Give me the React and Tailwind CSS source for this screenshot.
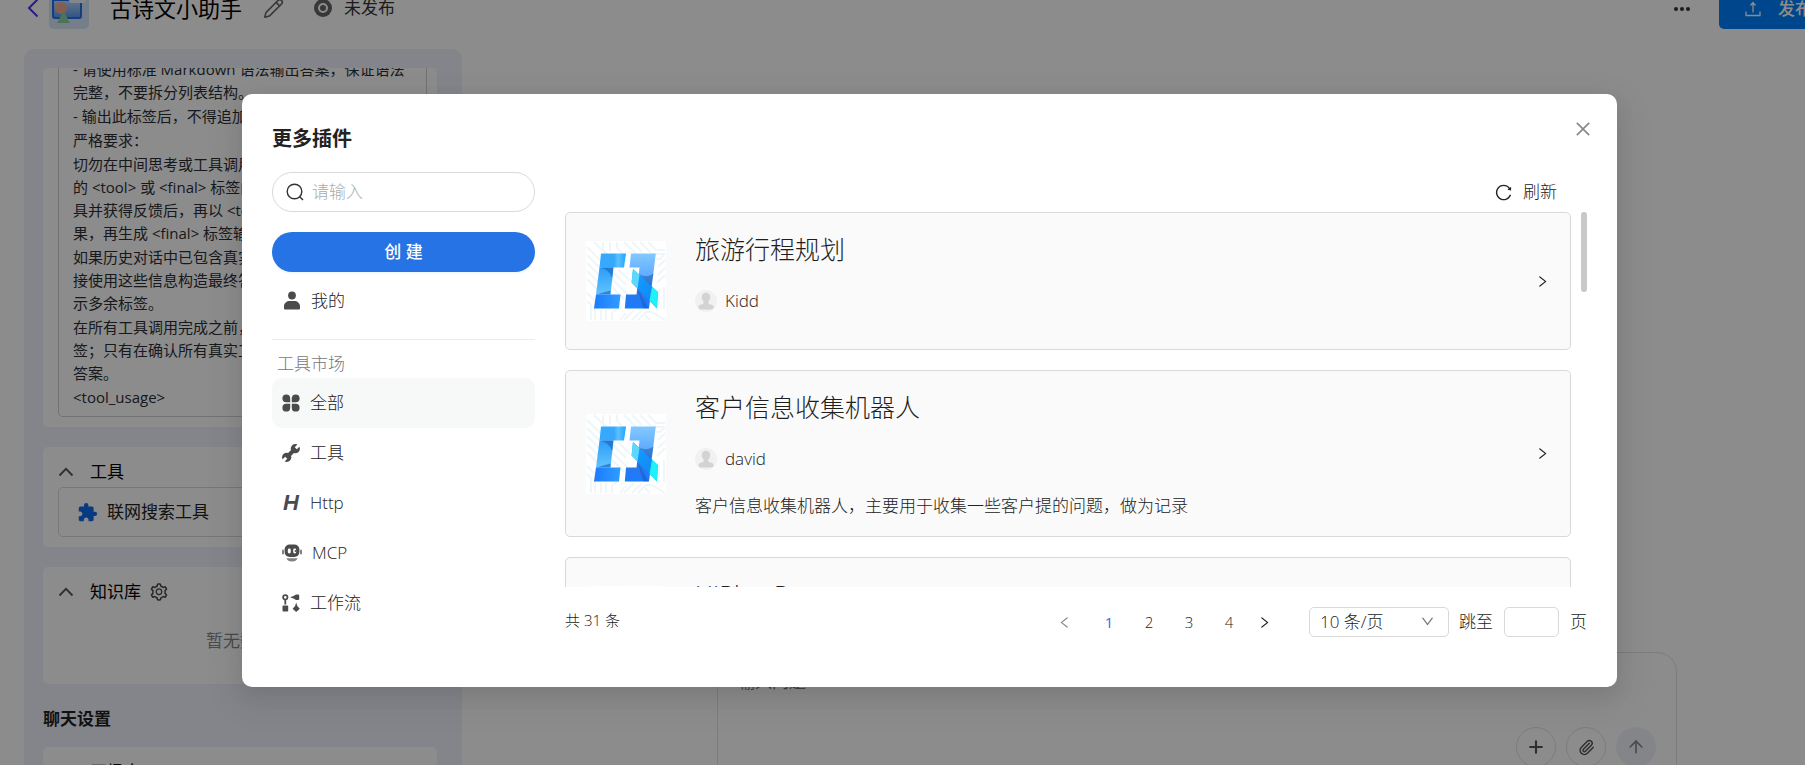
import React, { useState } from "react";
import {
  AiOutlineClose,
  AiOutlineDown,
  AiOutlineLeft,
  AiOutlineReload,
  AiOutlineRight,
  AiOutlineSetting,
} from "react-icons/ai";
import { MdExtension } from "react-icons/md";
import { ArrowUp, Paperclip, Pencil, Plus } from "lucide-react";

const PROMPT = [
  "- 请使用标准 Markdown 语法输出答案，保证语法\n完整，不要拆分列表结构。",
  "- 输出此标签后，不得追加",
  "严格要求：",
  "切勿在中间思考或工具调用\n的 <tool> 或 <final> 标签内\n具并获得反馈后，再以 <tool>\n果，再生成 <final> 标签输出",
  "如果历史对话中已包含真实\n接使用这些信息构造最终答\n示多余标签。",
  "在所有工具调用完成之前，\n签；只有在确认所有真实工\n答案。",
  "<tool_usage>",
];

const PLUGINS = [
  { id: 1, name: "旅游行程规划", author: "Kidd", desc: "" },
  {
    id: 2,
    name: "客户信息收集机器人",
    author: "david",
    desc: "客户信息收集机器人，主要用于收集一些客户提的问题，做为记录",
  },
  { id: 3, name: "HIPlus-P", author: "david", desc: "" },
];

const SearchIcon = () => (
  <svg width="18" height="18" viewBox="0 0 18 18" fill="none" stroke="#333" strokeWidth="1.400">
    <circle cx="8.500" cy="8.500" r="7.300" />
    <path d="M13.500 13.500 17 17" />
  </svg>
);

const UserIcon = () => (
  <svg width="18" height="20" viewBox="0 0 18 20" fill="#4b4b4b">
    <circle cx="9" cy="4.500" r="3.900" />
    <path d="M1 18.500v-3.200C1 12 4 10 6.500 10h5c2.500 0 5.500 2 5.500 5.300v2.200a1 1 0 0 1-1 1H2a1 1 0 0 1-1-1z" />
  </svg>
);

const AllIcon = () => (
  <svg width="18" height="18" viewBox="0 0 18 18" fill="#4b4b4b">
    <path d="M8.200 8.200H4.300A3.900 3.900 0 1 1 8.200 4.300z" />
    <path d="M9.800 8.200V4.300a3.900 3.900 0 1 1 3.900 3.900z" />
    <path d="M8.200 9.800v3.900a3.900 3.900 0 1 1-3.900-3.900z" />
    <path d="M9.800 9.800h3.900a3.900 3.900 0 1 1-3.900 3.900z" />
  </svg>
);

const WrenchIcon = () => (
  <svg width="18" height="18" viewBox="0 0 18 18">
    <mask id="jaws">
      <rect width="18" height="18" fill="#fff" />
      <path d="M13.800 4.200 18 0M4.200 13.800 0 18" stroke="#000" strokeWidth="3" />
    </mask>
    <g mask="url(#jaws)" fill="#4b4b4b">
      <circle cx="13.300" cy="4.700" r="4.600" />
      <circle cx="4.700" cy="13.300" r="4.600" />
      <path d="M5 13 13 5" stroke="#4b4b4b" strokeWidth="4" />
    </g>
  </svg>
);

const HttpIcon = () => (
  <span className="flex w-[18px] justify-center font-['Liberation_Sans',sans-serif] text-[22px] leading-5 font-bold italic text-[#4b4b4b]">
    H
  </span>
);

const RobotIcon = () => (
  <svg width="20" height="18" viewBox="0 0 20 18" fill="#4b4b4b">
    <rect x="0" y="5.500" width="2" height="5" rx="1" opacity="0.700" />
    <rect x="18" y="5.500" width="2" height="5" rx="1" opacity="0.700" />
    <rect x="2.600" y="0.500" width="14.800" height="12.500" rx="5" />
    <rect x="5.800" y="4.500" width="3" height="5" rx="1.400" fill="#fff" />
    <rect x="11.200" y="4.500" width="3" height="5" rx="1.400" fill="#fff" />
    <circle cx="13.600" cy="7" r="1" />
    <path d="M4.500 14.200h11c-.8 2.400-2.500 3.300-5.500 3.300s-4.700-.9-5.500-3.300z" opacity="0.700" />
  </svg>
);

const FlowIcon = () => (
  <svg width="18" height="18" viewBox="0 0 18 18" fill="#4b4b4b">
    <circle cx="3.300" cy="3.300" r="2.200" fill="none" stroke="#4b4b4b" strokeWidth="1.700" />
    <path d="M2.400 6h1.800v4.500H2.400z" />
    <rect x="0.500" y="11.500" width="5.700" height="6" rx="1" />
    <path d="M8 3.300 11.500 2l2.500-1.500h2.200a1 1 0 0 1 1 1v3.600a1 1 0 0 1-1 1H14L11.500 4.600z" />
    <path d="M14.200 8.500l1.100 3.500 2.500 2.700-3.600 3.300-3.600-3.300 2.500-2.700z" />
  </svg>
);

const MARKET = [
  { key: "all", label: "全部", icon: <AllIcon /> },
  { key: "tool", label: "工具", icon: <WrenchIcon /> },
  { key: "http", label: "Http", icon: <HttpIcon /> },
  { key: "mcp", label: "MCP", icon: <RobotIcon /> },
  { key: "flow", label: "工作流", icon: <FlowIcon /> },
];

const PluginLogo = ({ id }) => (
  <svg width="80" height="80" viewBox="0 0 80 80" className="shrink-0">
    <defs>
      <linearGradient id={`top${id}`} x1="0" x2="1">
        <stop offset="0.550" stopColor="#36a9ff" />
        <stop offset="0.700" stopColor="#5cc0ff" />
        <stop offset="1" stopColor="#1ea6ff" />
      </linearGradient>
      <linearGradient id={`left${id}`} x1="0" x2="0" y1="0" y2="1">
        <stop offset="0" stopColor="#2b9cf8" />
        <stop offset="1" stopColor="#62c4ff" />
      </linearGradient>
      <linearGradient id={`base${id}`} x1="0" x2="1">
        <stop offset="0" stopColor="#1b7bff" />
        <stop offset="1" stopColor="#2f9dff" />
      </linearGradient>
      <linearGradient id={`right${id}`} x1="0" x2="0" y1="0" y2="1">
        <stop offset="0" stopColor="#84c8ff" />
        <stop offset="0.450" stopColor="#5aa9ff" />
        <stop offset="0.700" stopColor="#2a78e8" />
        <stop offset="1" stopColor="#1b7bff" />
      </linearGradient>
      <linearGradient id={`band${id}`} x1="0" x2="1" y1="0" y2="1">
        <stop offset="0" stopColor="#18a0ff" />
        <stop offset="1" stopColor="#0b84f5" />
      </linearGradient>
    </defs>
    <rect width="80" height="80" rx="2" fill="#fff" />
    <g fill="none" stroke="#eef6fa" strokeWidth="1.800">
      <path d="M1 6l20 20M1 14l16 16M1 22l14 14M1 30l12 12M8 1l16 16M1 38l10 10M1 52l8 8v19M1 60l4 4v15M15 79V69M20 79V69M26 79V72l6-5" />
      <path d="M17 1v8l4 4M24 1v10M31 1v6l8 8M38 1l14 14M46 1l10 10M54 1l12 12h13M62 1l8 8h9M70 18h4l5-5M72 26l7-7M72 34l7-7M71 42l8-8M73 48v16M78 46v22" />
      <path d="M26 30l14 14M32 28l12 12M26 38l16 16M26 46l12 12M38 79l10-10M46 79l9-9M52 79l8-8h6l13 8M34 79l6-7M64 79l-5-5" />
    </g>
    <path d="M15 12.500H40L38 26.500H13.500z" fill={`url(#top${id})`} />
    <path d="M13.500 26.500H27.500L24.500 53.500H10z" fill={`url(#left${id})`} />
    <path d="M14 26.500h13.300l-1 10.500c-2.500-6-6-9-12.300-10.500z" fill="#175bb0" opacity="0.550" />
    <path d="M10 53.500l14.500-4v4z" fill="#175bb0" opacity="0.600" />
    <path d="M10 53.500H34.500L33 67.500H8z" fill={`url(#base${id})`} />
    <path d="M45 12.500H69.800L63 67.500H38.800L40 53.500H50.500L53.500 26.500H43.500z" fill={`url(#right${id})`} />
    <path d="M53 33c5 3 9 3 14.500-.5L65 46z" fill="#1c4fa8" opacity="0.500" />
    <path d="M51 47l11.500 20.500h-5z" fill="#143f9a" opacity="0.300" />
    <path d="M47 28L71.800 51 71 67.500 45.600 41.500z" fill={`url(#band${id})`} />
    <path d="M47 28l6.500 6-2 13.600-5.900-6.100z" fill="#5cd8ff" />
    <path d="M66 45.600l5.800 5.400-.8 16.500-7.500-7.700z" fill="#1ff0fa" />
  </svg>
);

const Avatar = () => (
  <svg width="22" height="22" viewBox="0 0 22 22">
    <circle cx="11" cy="11" r="11" fill="#f1f1f1" />
    <path
      d="M11 2.800c2.600 0 4.200 1.900 4.200 4.300 0 1.900-.8 3.600-1.900 4.600-.3 1.600.3 2.300 2.600 2.800 1.900.4 2.700 1.200 2.700 2.800 0 1.500-1.300 2.200-2.600 2.200H6c-1.300 0-2.600-.7-2.600-2.200 0-1.600.8-2.400 2.700-2.800 2.300-.5 2.900-1.200 2.600-2.800-1.100-1-1.900-2.700-1.900-4.600 0-2.400 1.600-4.300 4.200-4.300z"
      fill="#d3d3d3"
    />
  </svg>
);

const Header = () => (
  <header className="flex h-[29px] items-end justify-between pr-6 pl-[26px]">
    <div className="flex h-[42px] items-center">
      <button aria-label="返回" className="mr-2 text-[#4a35f0]">
        <svg width="15" height="20" viewBox="0 0 15 20" fill="none" stroke="currentColor" strokeWidth="2">
          <path d="M11.500 1.500 3 10l8.500 8.500" />
        </svg>
      </button>
      <svg width="40" height="40" viewBox="0 0 40 40" className="self-end">
        <defs>
          <linearGradient id="folder" x1="0" x2="0" y1="0" y2="1">
            <stop offset="0" stopColor="#b9d6fb" />
            <stop offset="1" stopColor="#5c9df5" />
          </linearGradient>
        </defs>
        <rect width="40" height="40" rx="5" fill="#d6e6fa" />
        <path d="M3 6a3 3 0 0 1 3-3h10l4 5h10a3 3 0 0 1 3 3v16a3 3 0 0 1-3 3H6a3 3 0 0 1-3-3z" fill="#2472f0" />
        <path d="M5 12h26v15a1 1 0 0 1-1 1H6a1 1 0 0 1-1-1z" fill="url(#folder)" />
        <path d="M20 8h17v4a2 2 0 0 1-2 2H22a2 2 0 0 1-2-2z" fill="#eef4fc" />
        <circle cx="12" cy="19" r="6" fill="#f0ab98" />
        <path d="M14.500 22 21 34H8z" fill="#8fd3a0" />
      </svg>
      <h1 className="ml-[21px] text-[22px] leading-8 text-black">古诗文小助手</h1>
      <button aria-label="编辑" className="ml-[21px] text-[#666]">
        <Pencil size={21} strokeWidth={1.800} />
      </button>
      <svg width="18" height="18" viewBox="0 0 18 18" className="ml-[30px]">
        <circle cx="9" cy="9" r="9" fill="#666" />
        <circle cx="9" cy="9" r="4" fill="#666" stroke="#fff" strokeWidth="2" />
      </svg>
      <span className="ml-3 text-[17px] text-[#333]">未发布</span>
    </div>
    <div className="flex h-10 items-center">
      <button aria-label="更多" className="mr-7 text-[#333]">
        <svg width="18" height="6" viewBox="0 0 18 6" fill="currentColor">
          <circle cx="3" cy="3" r="2" />
          <circle cx="9" cy="3" r="2" />
          <circle cx="15" cy="3" r="2" />
        </svg>
      </button>
      <button className="flex h-10 items-center gap-[17px] rounded-[5px] bg-[#0080ff] pr-[23px] pl-[26px] text-[17px] font-medium whitespace-nowrap text-white">
        <svg width="16" height="16" viewBox="0 0 16 16" fill="none" stroke="currentColor" strokeWidth="1.300">
          <path d="M1 10.500v4h14v-4M8 11.500V2M5.500 4.500 8 1.500l2.500 3" />
        </svg>
        发布
      </button>
    </div>
  </header>
);

const PanelHeading = ({ children }) => (
  <div className="flex h-[25px] items-center text-[17px] text-black">
    <button aria-label="收起" className="mr-4 text-[#555]">
      <svg width="16" height="10" viewBox="0 0 16 10" fill="none" stroke="currentColor" strokeWidth="1.800">
        <path d="M1.500 8.500 8 1.800l6.500 6.700" />
      </svg>
    </button>
    {children}
  </div>
);

const ConfigPanel = () => (
  <aside className="flex w-[438px] shrink-0 flex-col overflow-hidden rounded-t-[10px] bg-[#eff3fd] pt-[19px] pr-[25px] pl-[19px]">
    <section className="flex h-[359px] shrink-0 overflow-hidden rounded-[5px] bg-white pr-[10px] pb-[10px] pl-[15px]">
      <div className="flex w-full flex-col justify-end gap-px rounded-b-[5px] border-x border-b border-[#cfcfcf] px-[14px] pb-[7px] text-[15px] leading-[23px] text-[#2b2f36]">
        {PROMPT.map((text) => (
          <p key={text} className="whitespace-pre">
            {text}
          </p>
        ))}
      </div>
    </section>

    <section className="mt-5 shrink-0 rounded-[5px] bg-white px-[15px] pt-3 pb-[10px]">
      <PanelHeading>工具</PanelHeading>
      <div className="mt-[3px] flex h-[50px] items-center gap-[9px] rounded-[5px] border border-[#d9d9d9] pl-[18px] text-[17px] text-[#222]">
        <MdExtension size={21} className="text-[#0f6bf0]" />
        联网搜索工具
      </div>
    </section>

    <section className="mt-5 h-[117px] shrink-0 rounded-[5px] bg-white px-[15px] pt-3">
      <PanelHeading>
        知识库
        <AiOutlineSetting size={20} className="ml-2 text-[#444]" />
      </PanelHeading>
      <p className="mt-6 text-center text-[17px] text-[#888]">暂无数据</p>
    </section>

    <h2 className="mt-[22px] text-[17px] leading-[26px] font-bold text-[#222]">聊天设置</h2>
    <section className="mt-[15px] h-24 shrink-0 rounded-[5px] bg-white px-[15px] pt-3">
      <PanelHeading>开场白</PanelHeading>
    </section>
  </aside>
);

const ChatBox = () => (
  <main className="flex flex-1 flex-col items-center justify-end pb-[31px] pl-[73px]">
    <div className="w-full max-w-[960px] rounded-[20px] border border-[#e2e2e2] px-5 pt-4 pb-5">
      <textarea
        aria-label="输入问题"
        placeholder="输入问题"
        className="block h-[58px] w-full resize-none text-[17px] leading-[26px] outline-none placeholder:text-[#777]"
      />
      <div className="flex justify-end gap-[10px]">
        <button aria-label="添加" className="flex size-10 items-center justify-center rounded-full border border-[#e2e2e2] text-[#555]">
          <Plus size={20} strokeWidth={2.500} />
        </button>
        <button aria-label="附件" className="flex size-10 items-center justify-center rounded-full border border-[#e2e2e2] text-[#555]">
          <Paperclip size={17} />
        </button>
        <button aria-label="发送" className="flex size-10 items-center justify-center rounded-full bg-[#f0f3f8] text-[#888]">
          <ArrowUp size={20} />
        </button>
      </div>
    </div>
  </main>
);

const PluginCard = ({ plugin }) => (
  <li className="flex shrink-0 items-center rounded-[5px] border border-[#d9d9d9] bg-[#fafafa] px-5 py-4">
    <PluginLogo id={plugin.id} />
    <div className="ml-[29px] min-w-0 flex-1">
      <h3 className="text-[25px] leading-10 text-[#1f1f1f]">{plugin.name}</h3>
      <div className="mt-[17px] flex h-[30px] items-center gap-2">
        <Avatar />
        <span>{plugin.author}</span>
      </div>
      <p className="mt-[17px] leading-[29px]">{plugin.desc}</p>
    </div>
    <button aria-label="查看">
      <AiOutlineRight size={15} />
    </button>
  </li>
);

const Pagination = () => {
  const [page, setPage] = useState(1);

  return (
    <div className="mt-5 flex h-[30px] items-center justify-between">
      <span className="pb-1 text-[15px]">共 31 条</span>
      <div className="flex items-center">
        <button aria-label="上一页" className="mr-5 flex w-5 justify-center text-[#888]">
          <AiOutlineLeft size={15} />
        </button>
        <div className="flex gap-[10px] text-[15px]">
          {[1, 2, 3, 4].map((n) => (
            <button
              key={n}
              onClick={() => setPage(n)}
              className={n === page ? "w-[30px] font-medium text-[#2673e5]" : "w-[30px]"}
            >
              {n}
            </button>
          ))}
        </div>
        <button aria-label="下一页" className="ml-[10px] flex w-5 justify-center">
          <AiOutlineRight size={15} />
        </button>
        <div className="relative mr-[10px] ml-[35px]">
          <select aria-label="每页条数" className="h-[30px] w-[140px] appearance-none rounded-[5px] border border-[#d9d9d9] bg-white pl-[10px] outline-none">
            <option>10 条/页</option>
          </select>
          <AiOutlineDown size={15} className="pointer-events-none absolute top-[7px] right-[14px] text-[#777]" />
        </div>
        <label className="flex items-center gap-[11px]">
          跳至
          <input type="text" className="h-[30px] w-[55px] rounded-[5px] border border-[#d9d9d9] px-2 outline-none" />
          页
        </label>
      </div>
    </div>
  );
};

const PluginModal = () => {
  const [active, setActive] = useState("all");

  return (
    <div
      role="dialog"
      aria-label="更多插件"
      className="relative w-[1375px] max-w-full rounded-[10px] bg-white px-[30px] pt-[30px] pb-[50px] text-[17px] font-light text-[#222] shadow-[0_8px_20px_rgba(0,0,0,0.08),0_11px_35px_10px_rgba(0,0,0,0.05)]"
    >
      <button aria-label="关闭" className="absolute top-[20px] right-[19px] flex size-[30px] items-center justify-center text-[#888]">
        <AiOutlineClose size={20} />
      </button>
      <h2 className="text-[20px] leading-[30px] font-bold">更多插件</h2>

      <div className="mt-[18px] flex gap-[30px]">
        <nav className="w-[263px] shrink-0">
          <label className="flex h-10 items-center gap-2 rounded-full border border-[#d9d9d9] px-[13px]">
            <SearchIcon />
            <input
              type="text"
              aria-label="搜索"
              placeholder="请输入"
              className="min-w-0 flex-1 outline-none placeholder:text-[#aaa]"
            />
          </label>
          <button className="mt-5 h-10 w-full rounded-full bg-[#2673e5] font-medium text-white shadow-[0_2px_0_rgba(5,145,255,0.06)]">
            创 建
          </button>
          <button className="mt-1 flex h-[50px] w-full items-center gap-[10px] pl-[11px]">
            <UserIcon />
            我的
          </button>
          <hr className="mt-[13px] border-[#ebebeb]" />
          <p className="mt-[10px] pl-[5px] leading-7 text-[#777]">工具市场</p>
          {MARKET.map((item) => (
            <button
              key={item.key}
              onClick={() => setActive(item.key)}
              className={`flex h-[50px] w-full items-center gap-[10px] rounded-[10px] pl-[10px] ${
                active === item.key ? "bg-[#f7f8f8]" : ""
              }`}
            >
              {item.icon}
              {item.label}
            </button>
          ))}
        </nav>

        <div className="min-w-0 flex-1">
          <div className="flex h-10 items-center justify-end pr-[30px]">
            <button className="flex items-center gap-[10px]">
              <AiOutlineReload size={19} />
              刷新
            </button>
          </div>
          {/* List */}
          <div className="flex h-[375px] gap-[10px] overflow-hidden">
            <ul className="flex flex-1 flex-col gap-5">
              {PLUGINS.map((plugin) => (
                <PluginCard key={plugin.id} plugin={plugin} />
              ))}
            </ul>
            <div className="h-20 w-[6px] rounded-full bg-[#c9c9c9]" />
          </div>
          <Pagination />
        </div>
      </div>
    </div>
  );
};

const App = () => (
  <div className="relative h-screen overflow-hidden bg-white font-['Open_Sans','Noto_Sans_CJK_SC',sans-serif]">
    <div className="flex h-[calc(100%+54px)] w-[calc(100%+54px)] flex-col">
      <Header />
      <div className="mt-5 flex min-h-0 flex-1 pl-6">
        <ConfigPanel />
        <ChatBox />
      </div>
    </div>
    {/* Mask and dialog */}
    <div className="absolute inset-0 bg-black/45">
      <div className="flex w-[calc(100%+54px)] justify-center pt-[94px]">
        <PluginModal />
      </div>
    </div>
  </div>
);

export default App;
